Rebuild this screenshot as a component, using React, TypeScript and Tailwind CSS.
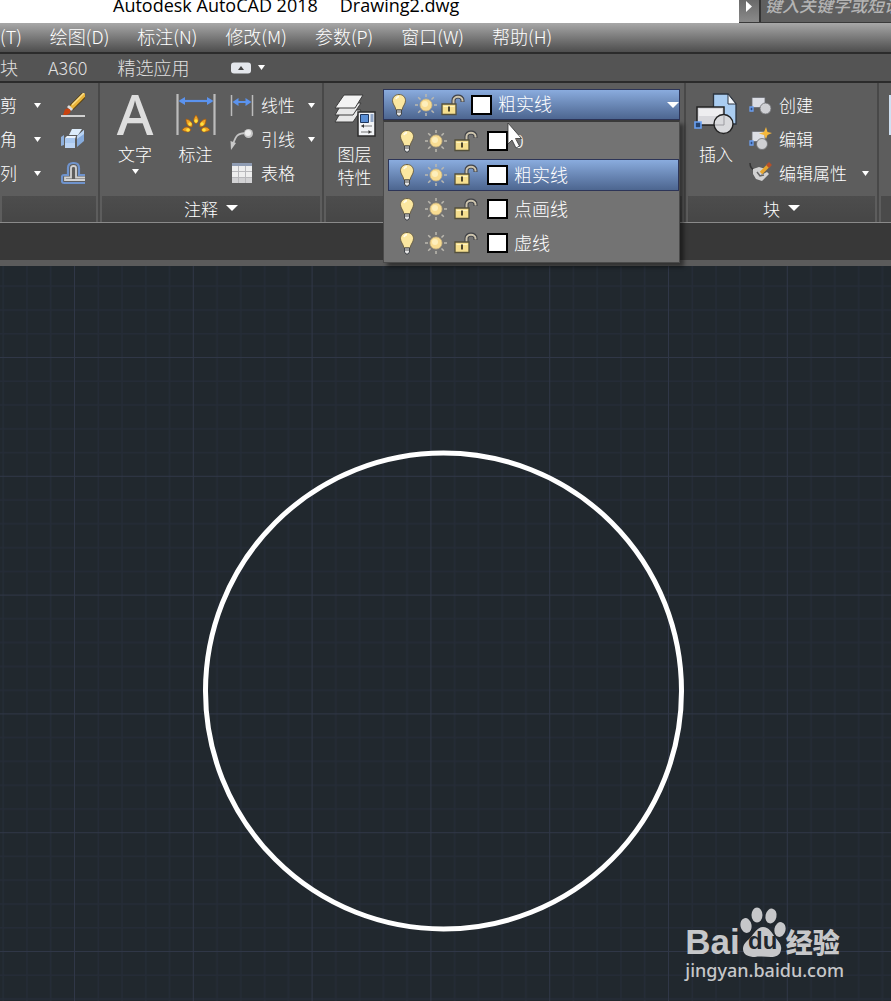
import React from 'react'
import clsx from 'clsx'

interface ILayer {
	id: number
	name: string
}

const layers: ILayer[] = [
	{ id: 0, name: '0' },
	{ id: 1, name: '粗实线' },
	{ id: 2, name: '点画线' },
	{ id: 3, name: '虚线' },
]

const menuItems = [
	'(T)',
	'绘图(D)',
	'标注(N)',
	'修改(M)',
	'参数(P)',
	'窗口(W)',
	'帮助(H)',
]

const Caret: React.FC<{ big?: boolean }> = ({ big }) => (
	<svg
		className={clsx('shrink-0', big ? 'w-3 h-[6px]' : 'w-[7px] h-[5px]')}
		viewBox="0 0 12 6"
		preserveAspectRatio="none"
	>
		<path d="M0 0h12L6 6z" fill="#fff" />
	</svg>
)

const BulbIcon = () => (
	<svg className="w-4 h-6 shrink-0" viewBox="0 0 16 24">
		<path
			d="M8 1.500c-4 0-6.500 2.700-6.500 6.200 0 3.500 2.700 5 3.500 9.300h6c.8-4.300 3.500-5.800 3.500-9.300C14.500 4.200 12 1.500 8 1.500z"
			fill="#fbe7a0"
			stroke="#6b6148"
			strokeWidth="1"
		/>
		<path d="M5 6c.5-1.500 1.500-2.300 3-2.500" stroke="#fffbe6" strokeWidth="1.800" fill="none" />
		<path d="M5.500 17h5v4L9 23H7l-1.500-2z" fill="#e6e6e6" stroke="#3f4348" />
		<path d="M5.500 19h5" stroke="#555" />
	</svg>
)

const SunIcon = () => (
	<svg className="w-[22px] h-[22px] shrink-0" viewBox="0 0 22 22">
		<g stroke="#bcb9b0" strokeWidth="1.500">
			<path d="M11 0v3M11 19v3M0 11h3M19 11h3M3.200 3.200l2.300 2.300M16.500 16.500l2.300 2.300M3.200 18.800l2.300-2.300M16.500 5.500l2.300-2.300" />
		</g>
		<circle cx="11" cy="11" r="6" fill="#f8dc92" stroke="#c9b27c" strokeWidth=".8" />
		<circle cx="10" cy="10" r="3" fill="#fdeebb" />
	</svg>
)

const LockIcon = () => (
	<svg className="w-6 h-[22px] shrink-0" viewBox="0 0 24 22">
		<path d="M12.500 11V6.500c0-5.500 9-5.500 9 0V8" fill="none" stroke="#3f4146" strokeWidth="4" />
		<path d="M12.500 11V6.500c0-5 9-5 9 0v1" fill="none" stroke="#cdc4ad" strokeWidth="2" />
		<path d="M1 10h14v10.500H1z" fill="#f6df8e" stroke="#54503c" strokeWidth="1.300" />
		<path d="M2.500 12.500h11" stroke="#fff4c0" />
		<path d="M8 12.500v5" stroke="#4c452c" strokeWidth="2" />
	</svg>
)

const BrushIcon = () => (
	<svg className="w-6 h-6" viewBox="0 0 24 24">
		<path d="M0 23h24" stroke="#d0d0d0" strokeWidth="2" />
		<path d="M10 15L23 2" stroke="#5b4210" strokeWidth="6" />
		<path d="M10 15L24 1" stroke="#e9b43a" strokeWidth="4" />
		<path d="M11 12L23 0" stroke="#fbe08b" strokeWidth="1.500" />
		<path d="M8 12l4 4-2 2-4-4z" fill="#dcdcdc" />
		<path d="M2 22c1-2 1-4 2-5.500 2-2 5-1 5.500 1 .5 3-3 5-7.500 4.500z" fill="#c8420f" />
	</svg>
)

const BoxesIcon = () => (
	<svg className="w-6 h-6" viewBox="0 0 24 24">
		<path d="M11 2h10l-4 6H8z" fill="#dcecfb" />
		<path d="M0 10l3-2v10l-3 1z" fill="#8fb0dc" />
		<path d="M4 11l2-2h9l-1 3H4z" fill="#eaf3fd" />
		<path d="M4 11h10v10H4z" fill="#a9c8ef" />
		<path d="M4 16h10v5H4z" fill="#bcd5f5" />
		<path d="M16 9l7-6v11l-7 6z" fill="#86abdc" />
		<path d="M16 9l7-6v4l-7 5z" fill="#b9d3f2" />
	</svg>
)

const OffsetIcon = () => (
	<svg className="w-6 h-6" viewBox="0 0 24 24" fill="none">
		<path
			d="M24 22H3q-2 0-2-2v-4q0-2 2-2h4V7q0-5 5-5h1q5 0 5 5v7h6"
			stroke="#6f93cc"
			strokeWidth="2.200"
		/>
		<path
			d="M24 19H4v-2.500h6V7q0-2 2.500-2T15 7v9.500h9"
			stroke="#d2d2d2"
			strokeWidth="1.800"
		/>
	</svg>
)

const DimensionIcon: React.FC<{ spark?: boolean }> = ({ spark }) =>
	spark ? (
		<svg className="w-10 h-11" viewBox="0 0 40 44">
			<path d="M1.500 2v41M38.500 2v41" stroke="#bcbcbc" strokeWidth="2.200" />
			<path d="M4 9h32" stroke="#5b93ee" strokeWidth="2.200" />
			<path d="M2.500 9L9 5v8zM37.500 9L31 5v8z" fill="#5b93ee" />
			<g fill="#f0a325" stroke="#a35c12" strokeWidth=".8">
				<path d="M20 23c3 4 3 6 0 9-3-3-3-5 0-9zM10 27c5 1 7 4 6 8-5 0-6-4-6-8zM30 27c-5 1-7 4-6 8 5 0 6-4 6-8zM6 38c3-4 7-4 9 0-2 3-6 2-9 0zM34 38c-3-4-7-4-9 0 2 3 6 2 9 0z" />
			</g>
			<g fill="#ffe23f">
				<circle cx="20" cy="29" r="1.800" />
				<circle cx="14" cy="32" r="1.800" />
				<circle cx="26" cy="32" r="1.800" />
				<circle cx="12" cy="38" r="1.800" />
				<circle cx="28" cy="38" r="1.800" />
			</g>
		</svg>
	) : (
		<svg className="w-6 h-6" viewBox="0 0 24 24">
			<path d="M1.500 2v21M22.500 2v21" stroke="#bcbcbc" strokeWidth="1.500" />
			<path d="M5 9h15" stroke="#5b93ee" strokeWidth="2" />
			<path d="M2.500 9l6-4v8zM21.500 9l-6-4v8z" fill="#5b93ee" />
		</svg>
	)

const LeaderIcon = () => (
	<svg className="w-6 h-6" viewBox="0 0 24 24">
		<path d="M3 17C6 9 7 6 17 6" stroke="#c4c4c4" strokeWidth="1.800" fill="none" />
		<path d="M1 23l-.5-9L6 16z" fill="#c9c9c9" />
		<circle cx="18.500" cy="6.500" r="4.500" fill="#c5c5c5" />
		<circle cx="18" cy="6" r="3" fill="#ececec" />
	</svg>
)

const TableIcon = () => (
	<svg className="w-6 h-6" viewBox="0 0 24 24">
		<path d="M2 2h20v20H2z" fill="#eee" />
		<path d="M2 2h20v3H2z" fill="#8f9cb3" />
		<path d="M2 16h20v6H2z" fill="#d2d2d4" />
		<path d="M2 10.500h20M2 16.500h20M8.500 5v17M15.500 5v17" stroke="#b9b9bc" />
	</svg>
)

const LayersIcon = () => (
	<svg className="w-11 h-[46px]" viewBox="0 0 44 46">
		<g fill="#e8e8e8" stroke="#3c3c3c">
			<path d="M2 30l7-12h19l-8 12z" />
			<path d="M2 23l7-12h19l-8 12z" />
			<path d="M2 16l9-13h19l-8 13z" fill="#f3f3f3" />
		</g>
		<path d="M25 20h17v24H25z" fill="#f1f3f6" stroke="#2c2c2c" strokeWidth="1.500" />
		<path d="M27.500 22.500h8v8h-8z" fill="#5a8fd6" stroke="#1d355c" />
		<path d="M37.500 22h3v8h-3z" fill="#90a5c5" />
		<path d="M28 34h11M28 40h11" stroke="#777" strokeWidth="1.200" />
		<path d="M31 32v4l-2.500-2zM35.500 38v4l2.500-2z" fill="#333" />
	</svg>
)

const InsertIcon = () => (
	<svg className="w-11 h-11" viewBox="0 0 44 44">
		<path d="M19.500 2H34l8 10v20H19.500z" fill="#aacdf1" stroke="#2b333e" strokeWidth="1.300" />
		<path d="M34 2v10h8z" fill="#f4f8fd" stroke="#2b333e" />
		<path d="M3 15h27v18H3z" fill="#d8d8dc" stroke="#222" strokeWidth="1.500" />
		<path d="M5 17h23v7H5z" fill="#eeeef0" />
		<circle cx="29.500" cy="32" r="9.500" fill="#d9dadd" stroke="#222" strokeWidth="1.400" />
		<path d="M30 23v10h-9" stroke="#9b9ba0" fill="none" />
		<path d="M1 30h6v6H1z" fill="#27446f" stroke="#69a1f4" strokeWidth="1.600" />
	</svg>
)

const BlockIcon: React.FC<{ star?: boolean }> = ({ star }) => (
	<svg className="w-6 h-6" viewBox="0 0 24 24">
		<path d="M4 4.500h13v10H4z" fill="#dcdee5" stroke="#6a6c72" strokeWidth=".8" />
		<path d="M2 14h3v4H2z" fill="#2f4f84" stroke="#6c9ff0" strokeWidth="1.300" />
		<circle cx={star ? 14 : 17.500} cy={star ? 17 : 15.500} r="5.500" fill="#cfd0d4" stroke="#6d6e72" strokeWidth=".8" />
		{star && <path d="M18 0l1.500 5L24 6l-4.500 2L18 12l-2-4-5-1.500L16 5z" fill="#f5b83c" />}
	</svg>
)

const AttributeIcon = () => (
	<svg className="w-6 h-6" viewBox="0 0 24 24">
		<path d="M2 2q0 6 5 7" fill="none" stroke="#333" strokeWidth="1.500" />
		<path d="M5 8l6-2 7 2-5 6 6-3 2 2-7 7-6-2-3-5z" fill="#d2d2d2" />
		<path d="M9 11l3 4 4-1" stroke="#666" strokeWidth="1.500" fill="none" />
		<path d="M13 12l8-8" stroke="#e6a52e" strokeWidth="3.500" />
		<path d="M19.500 5.500l3-3" stroke="#b5502a" strokeWidth="4" />
	</svg>
)

const PawIcon = () => (
	<svg className="w-[46px] h-[50px]" viewBox="0 0 46 50" fill="#c6c7c9">
		<ellipse cx="6" cy="18.500" rx="5.500" ry="7.500" transform="rotate(-12 6 18.500)" />
		<ellipse cx="17" cy="8" rx="5.500" ry="7.500" />
		<ellipse cx="31" cy="9" rx="5.500" ry="7.500" transform="rotate(12 31 9)" />
		<ellipse cx="40" cy="22.500" rx="5.500" ry="7.500" transform="rotate(12 40 22.500)" />
		<path d="M23 20c6 0 9 6 12 10 4 5 7 8 6 13-1 6-6 7-10 7-5 0-11-1-16 0-6 0-12-2-12-8 0-5 4-8 7-11 4-4 7-11 13-11z" />
	</svg>
)

interface IToolRow {
	icon?: React.ReactNode
	label: string
	caret?: boolean
}

const ToolRow: React.FC<IToolRow> = ({ icon, label, caret }) => (
	<button className="h-[34px] w-full flex items-center gap-[7px] whitespace-nowrap">
		{icon}
		<span className="pb-[2px]">{label}</span>
		{caret && (
			<span className="ml-auto flex">
				<Caret />
			</span>
		)}
	</button>
)

interface IPanel {
	title?: string
	className?: string
	children?: React.ReactNode
}

const Panel: React.FC<IPanel> = ({ title, className, children }) => (
	<section
		className={clsx(
			'shrink-0 flex flex-col border-r-2 border-[#484848]',
			className
		)}
	>
		<div className="flex h-[113px] pt-[5px]">{children}</div>
		<div className="h-[26px] mx-[2px] pb-[2px] flex items-center justify-center gap-2 bg-linear-to-b from-[#4d4d4d] to-[#464646]">
			{title && (
				<>
					<span>{title}</span>
					<Caret big />
				</>
			)}
		</div>
	</section>
)

interface ILayerState {
	name: string
	inList?: boolean
}

const LayerState: React.FC<ILayerState> = ({ name, inList }) => (
	<>
		<BulbIcon />
		<span className={clsx('flex', inList ? 'ml-[10px] mr-[7px]' : 'ml-2 mr-1')}>
			<SunIcon />
		</span>
		<LockIcon />
		<span
			className={clsx(
				'w-[21px] h-5 bg-white border-2 border-black shrink-0 mr-[6px]',
				inList ? 'ml-[9px]' : 'ml-[6px]'
			)}
		/>
		<span className="text-[18px] pb-[2px]">{name}</span>
	</>
)

const LayerSelect: React.FC = () => {
	const [current, setCurrent] = React.useState<number>(1)
	const [open, setOpen] = React.useState<boolean>(true)

	return (
		<div className="relative self-start w-[297px] mt-[1px]">
			<button
				aria-haspopup="listbox"
				aria-expanded={open}
				onClick={() => setOpen(!open)}
				className="w-full h-[31px] pl-[7px] flex items-center border border-[#2d3558] bg-linear-to-b from-[#8aacde] to-[#4d6690]"
			>
				<LayerState name={layers[current].name} />
				<span className="ml-auto flex">
					<Caret big />
				</span>
			</button>
			{open && (
				<ul
					role="listbox"
					className="absolute z-10 top-full left-0 w-full pt-[1px] pb-[1px] pl-[4px] bg-[#737373] border border-t-2 border-[#4a4a4a] border-t-[#3a3a3a] shadow-[4px_4px_4px_rgba(0,0,0,0.45)]"
				>
					{layers.map((layer) => (
						<li
							key={layer.id}
							role="option"
							aria-selected={layer.id === current}
							onClick={() => setCurrent(layer.id)}
							className={clsx(
								'h-8 my-[2px] pl-[10px] flex items-center border cursor-default',
								layer.id === current
									? 'border-[#2d3558] bg-linear-to-b from-[#8aacde] to-[#4d6690]'
									: 'border-transparent'
							)}
						>
							<LayerState name={layer.name} inList />
						</li>
					))}
				</ul>
			)}
			{/* mouse pointer */}
			<svg
				className="absolute z-20 left-[124px] top-[33px] w-[18px] h-7"
				viewBox="0 0 18 28"
			>
				<path
					d="M1 1v21l4-4 4 8 3.500-2-4-7.500h6z"
					fill="#fff"
					stroke="#333"
					strokeWidth=".8"
				/>
			</svg>
		</div>
	)
}

const Canvas: React.FC = () => (
	<main className="relative flex-1 min-h-[735px] bg-[#21282e]">
		<svg className="absolute inset-0 w-full h-full">
			<defs>
				<pattern
					id="grid"
					x="74"
					y="91"
					width="118.8"
					height="118.8"
					patternUnits="userSpaceOnUse"
				>
					<path
						d="M24.300 0v119M48 0v119M71.800 0v119M95.500 0v119M0 24.300h119M0 48h119M0 71.800h119M0 95.500h119"
						stroke="#252c37"
						strokeWidth="1.500"
					/>
					<path d="M.5 0v119M0 .5h119" stroke="#303747" />
				</pattern>
			</defs>
			<rect width="100%" height="100%" fill="url(#grid)" />
			<circle cx="443.500" cy="425" r="238" fill="none" stroke="#fff" strokeWidth="5" />
		</svg>
		<div className="absolute right-[47px] bottom-[18px] text-[#c6c7c9]">
			<div className="flex items-end h-[50px]">
				<span className="font-['Liberation_Sans'] font-bold text-[35px] leading-[30px]">
					Bai
				</span>
				<span className="relative">
					<PawIcon />
					<span className="absolute inset-x-0 bottom-1 text-center font-['Liberation_Sans'] font-bold text-[24px] leading-6 text-[#21282e]">
						du
					</span>
				</span>
				<span className="font-black text-[27px] leading-[30px]">经验</span>
			</div>
			<div className="font-['Noto_Sans'] font-medium text-[18px] leading-[26px]">
				jingyan.baidu.com
			</div>
		</div>
	</main>
)

const App: React.FC = () => {
	return (
		<div className="min-h-screen flex flex-col overflow-hidden bg-[#383838] text-white text-[17px] leading-[23px] font-['Noto_Sans_CJK_SC',sans-serif] font-light">
			<header className="h-[23px] flex items-end bg-white text-black overflow-hidden">
				<h1 className="flex gap-[22px] pl-[113px] pb-[6px] text-[18px] leading-6 font-normal font-['Open_Sans',sans-serif] whitespace-nowrap">
					<span>Autodesk AutoCAD 2018</span>
					<span>Drawing2.dwg</span>
				</h1>
				<div className="ml-auto w-[152px] h-[23px] flex items-end bg-[#5f5f5f] border-b border-[#3a3a3a]">
					<button
						aria-label="搜索"
						className="w-[22px] h-full flex items-start justify-center pt-[1px] bg-linear-to-b from-[#6a6a6a] to-[#8a8a8a] border-r-2 border-[#333]"
					>
						<svg className="w-[6px] h-[11px]" viewBox="0 0 6 11">
							<path d="M0 0l6 5.500L0 11z" fill="#fff" />
						</svg>
					</button>
					<input
						type="text"
						aria-label="键入关键字或短语"
						placeholder="键入关键字或短语"
						className="min-w-0 flex-1 h-6 pl-1 mb-[6px] bg-[#5f5f5f] italic font-medium placeholder:text-[#b4b4b4]"
					/>
				</div>
			</header>

			<nav className="h-[31px] pb-[2px] flex items-center gap-7 bg-linear-to-b from-[#a8a8a8] to-[#4e4e4e] border-b-2 border-[#2b2b2b] text-[18px] whitespace-nowrap">
				{menuItems.map((item) => (
					<button key={item}>{item}</button>
				))}
			</nav>

			<div className="h-[29px] flex items-center gap-[30px] bg-[#545454] border-b-2 border-[#2b2b2b] text-[18px] text-[#e0e0e0] whitespace-nowrap">
				<button>块</button>
				<button>A360</button>
				<button>精选应用</button>
				<button aria-label="最小化" className="ml-3 flex items-center gap-[7px]">
					<svg className="w-5 h-3" viewBox="0 0 20 12">
						<rect width="20" height="11" y=".5" rx="3" fill="#e4e7ec" />
						<path d="M7 8l3-4 3 4z" fill="#444" />
					</svg>
					<Caret />
				</button>
			</div>

			<div className="flex bg-[#5d5d5d] border-b border-[#8a8a8a]">
				<Panel className="w-[100px]">
					<div className="w-[41px]">
						<ToolRow label="剪" caret />
						<ToolRow label="角" caret />
						<ToolRow label="列" caret />
					</div>
					<div className="ml-5 flex flex-col">
						<button aria-label="画笔" className="h-[34px]">
							<BrushIcon />
						</button>
						<button aria-label="阵列" className="h-[34px]">
							<BoxesIcon />
						</button>
						<button aria-label="偏移" className="h-[34px]">
							<OffsetIcon />
						</button>
					</div>
				</Panel>

				<Panel title="注释" className="w-[224px]">
					<button className="w-[70px] pt-1 flex flex-col items-center">
						<span className="h-11 font-['Noto_Sans'] font-medium text-[56px] leading-[42px] text-[#dedede]">
							A
						</span>
						<span className="mt-[6px] mb-1">文字</span>
						<Caret />
					</button>
					<button className="w-[51px] pt-1 flex flex-col items-center">
						<DimensionIcon spark />
						<span className="mt-[6px]">标注</span>
					</button>
					<div className="ml-[9px] w-[85px]">
						<ToolRow icon={<DimensionIcon />} label="线性" caret />
						<ToolRow icon={<LeaderIcon />} label="引线" caret />
						<ToolRow icon={<TableIcon />} label="表格" />
					</div>
				</Panel>

				<Panel className="w-[362px]">
					<button className="w-[59px] pl-[2px] pt-1 flex flex-col items-center">
						<LayersIcon />
						<span className="mt-1">图层</span>
						<span>特性</span>
					</button>
					<LayerSelect />
				</Panel>

				<Panel title="块" className="w-[193px]">
					<button className="w-[60px] pt-1 flex flex-col items-center">
						<InsertIcon />
						<span className="mt-[6px]">插入</span>
					</button>
					<div className="ml-[2px] w-[121px]">
						<ToolRow icon={<BlockIcon />} label="创建" />
						<ToolRow icon={<BlockIcon star />} label="编辑" />
						<ToolRow icon={<AttributeIcon />} label="编辑属性" caret />
					</div>
				</Panel>

				<section className="flex-1">
					<div className="h-[113px] pl-[10px] pt-3">
						<div className="h-10 bg-[#cfe0f2]" />
					</div>
					<div className="h-[26px] ml-[2px] bg-[#4a4a4a]" />
				</section>
			</div>

			<div className="h-[43px] border-b-[6px] border-[#5b5b5b]" />

			<Canvas />
		</div>
	)
}

export default App
